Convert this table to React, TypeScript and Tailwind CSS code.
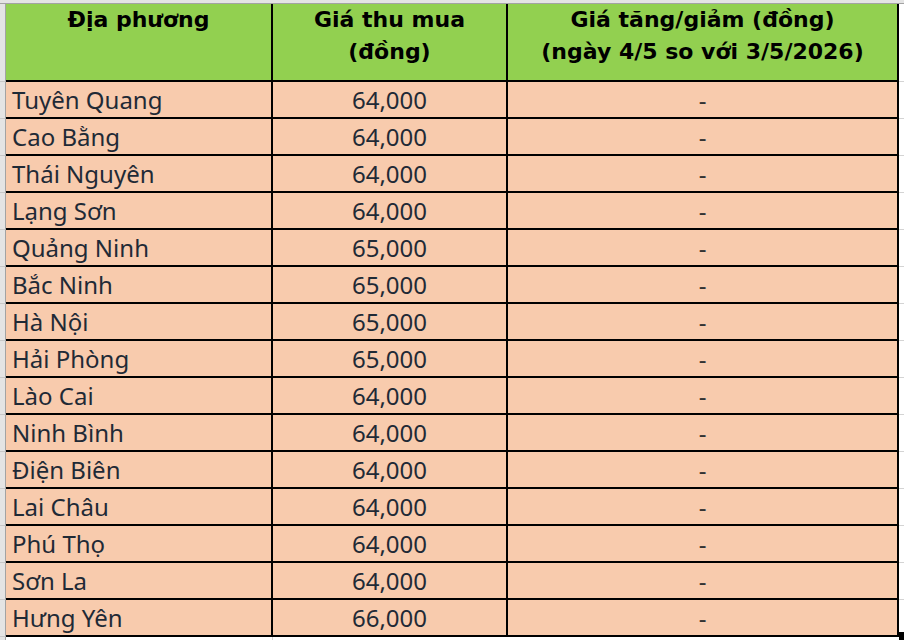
const rows: [string, string][] = [
  ["Tuyên Quang", "64,000"],
  ["Cao Bằng", "64,000"],
  ["Thái Nguyên", "64,000"],
  ["Lạng Sơn", "64,000"],
  ["Quảng Ninh", "65,000"],
  ["Bắc Ninh", "65,000"],
  ["Hà Nội", "65,000"],
  ["Hải Phòng", "65,000"],
  ["Lào Cai", "64,000"],
  ["Ninh Bình", "64,000"],
  ["Điện Biên", "64,000"],
  ["Lai Châu", "64,000"],
  ["Phú Thọ", "64,000"],
  ["Sơn La", "64,000"],
  ["Hưng Yên", "66,000"],
];

export default function App() {
  return (
    <div className="w-[904px] h-[640px] overflow-hidden bg-white flex flex-col">
      {/* sheet chrome along the top */}
      <div className="h-[4px] shrink-0 bg-[#e4e4e4] border-b border-[#a3a3a3]" />

      {/* header row */}
      <div className="flex h-[78px] shrink-0">
        <div className="w-[6px] shrink-0 bg-[#e4e4e4] border-r border-[#a3a3a3] border-b border-b-[#c8c8c8]" />
        <div className="flex w-[893px] shrink-0 border-b-2 border-r-2 border-black bg-[#92d050] font-['DejaVu_Sans',sans-serif] font-bold text-[22px] leading-[32px] text-black text-center">
          <div className="w-[267px] shrink-0 border-r-2 border-black">Địa phương</div>
          <div className="w-[235px] shrink-0 border-r-2 border-black">
            Giá thu mua
            <br />
            (đồng)
          </div>
          <div className="flex-1">
            Giá tăng/giảm (đồng)
            <br />
            (ngày 4/5 so với 3/5/2026)
          </div>
        </div>
        <div className="flex-1 border-b border-[#d4d4d4]" />
      </div>

      {rows.map(([name, price], i) => (
        <div key={i} className="flex h-[37px] shrink-0">
          <div className="w-[6px] shrink-0 bg-[#e4e4e4] border-r border-[#a3a3a3] border-b border-b-[#c8c8c8]" />
          <div className="flex w-[893px] shrink-0 border-b-2 border-r-2 border-black bg-[#f8cbad] font-['Noto_Sans',sans-serif] text-[24px] leading-[35px] text-[#1f2a36]">
            <div className="w-[267px] shrink-0 border-r-2 border-black pl-[6px]">{name}</div>
            <div className="w-[235px] shrink-0 border-r-2 border-black text-center">{price}</div>
            <div className="flex-1 text-center text-[#333]">-</div>
          </div>
          <div className="relative flex-1 border-b border-[#d4d4d4]">
            {i === rows.length - 1 && (
              <span className="absolute left-0 top-[32px] w-[6px] h-[8px] bg-black" />
            )}
          </div>
        </div>
      ))}

      <div className="flex flex-1">
        <div className="w-[6px] shrink-0 bg-[#e4e4e4] border-r border-[#a3a3a3]" />
        <div className="w-[267px] shrink-0 border-r border-[#d4d4d4]" />
      </div>
    </div>
  );
}
